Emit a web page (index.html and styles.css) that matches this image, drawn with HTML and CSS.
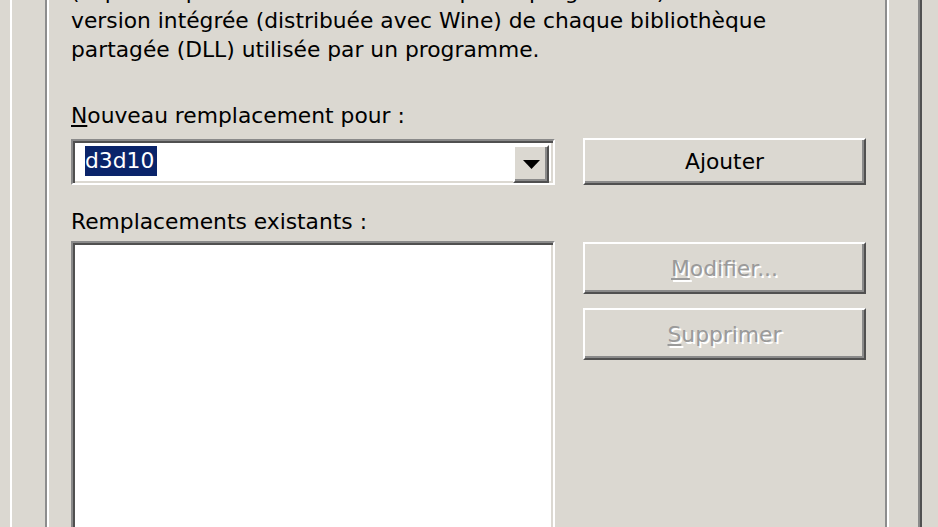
FILE: index.html
```html
<!DOCTYPE html>
<html>
<head>
<title>Bibliothèques</title>
<link rel="stylesheet" href="styles.css">
</head>
<body>
<div class="tab-page">
<div class="group">
<p class="intro">(copiée depuis Windows ou fournie par le programme) ou la<br>version intégrée (distribuée avec Wine) de chaque bibliothèque<br>partagée (DLL) utilisée par un programme.</p>

<div class="label new-label"><u>N</u>ouveau remplacement pour :</div>

<div class="combo">
<span class="combo-value">d3d10</span>
<span class="combo-btn">
<svg width="17" height="9" viewBox="0 0 17 9"><polygon points="0,0 17,0 8.5,9" fill="#000"/></svg>
</span>
</div>
<button class="btn add-btn">Ajouter</button>

<div class="label list-label">Remplacements existants :</div>

<div class="listbox"></div>
<div class="side-buttons">
<button class="btn" disabled><u>M</u>odifier...</button>
<button class="btn" disabled><u>S</u>upprimer</button>
</div>
</div>
</div>
</body>
</html>
```

FILE: styles.css
```css
html{
overflow:hidden;
}
body{
margin:0;
background:#dbd8d1;
height:527px;
overflow:hidden;
font-family:"DejaVu Sans",sans-serif;
font-size:21.8px;
color:#000;
}
.tab-page{
margin-left:10px;
width:912px;
height:527px;
border-left:2px solid #fff;
border-right:2px solid #505050;
box-shadow:inset -2px 0 #8a8a8a;
padding-left:33px;
box-sizing:border-box;
overflow:hidden;
}
.group{
height:527px;
width:844px;
box-sizing:border-box;
border-left:2px solid #8d8d8d;
border-right:2px solid #fff;
box-shadow:inset 2px 0 #fff, inset -2px 0 #8d8d8d;
padding:0 17px 0 24px;
display:grid;
grid-template-columns:484px 283px;
column-gap:28px;
align-content:start;
align-items:start;
overflow:hidden;
}
.intro{
grid-column:1 / 3;
margin:-23px 0 0 0;
line-height:29px;
white-space:nowrap;
}
.label{
grid-column:1 / 3;
line-height:29px;
}
.new-label{
margin-top:37px;
}
.list-label{
margin-top:22px;
}
.combo{
margin-top:9px;
height:46px;
box-sizing:border-box;
background:#fff;
border-top:2px solid #8a8a8a;
border-left:2px solid #8a8a8a;
border-bottom:2px solid #fff;
border-right:2px solid #fff;
box-shadow:inset 2px 2px #505050, inset -2px -2px #dbd8d1;
padding:5px 4px 4px 12px;
display:flex;
justify-content:space-between;
}
.combo-value{
background:#0a246a;
color:#fff;
height:30px;
line-height:30px;
width:72px;
}
.combo-btn{
width:36px;
height:38px;
margin-top:-1px;
box-sizing:border-box;
background:#dbd8d1;
border-top:2px solid #fff;
border-left:2px solid #fff;
border-bottom:2px solid #505050;
border-right:2px solid #505050;
box-shadow:inset -2px -2px #8a8a8a;
display:flex;
align-items:center;
justify-content:center;
}
.btn{
display:block;
width:283px;
height:52px;
box-sizing:border-box;
background:#dbd8d1;
border-top:2px solid #fff;
border-left:2px solid #fff;
border-bottom:2px solid #505050;
border-right:2px solid #505050;
box-shadow:inset -2px -2px #8a8a8a;
font-family:inherit;
font-size:21.8px;
color:#000;
padding:0;
}
.add-btn{
margin-top:8px;
height:47px;
}
.btn:disabled{
color:#9a9a9a;
text-shadow:2px 2px #fff;
}
.listbox{
margin-top:5px;
height:300px;
box-sizing:border-box;
background:#fff;
border-top:2px solid #8a8a8a;
border-left:2px solid #8a8a8a;
border-bottom:2px solid #fff;
border-right:2px solid #fff;
box-shadow:inset 2px 2px #505050, inset -2px -2px #dbd8d1;
}
.side-buttons{
margin-top:6px;
display:flex;
flex-direction:column;
gap:14px;
}
```
